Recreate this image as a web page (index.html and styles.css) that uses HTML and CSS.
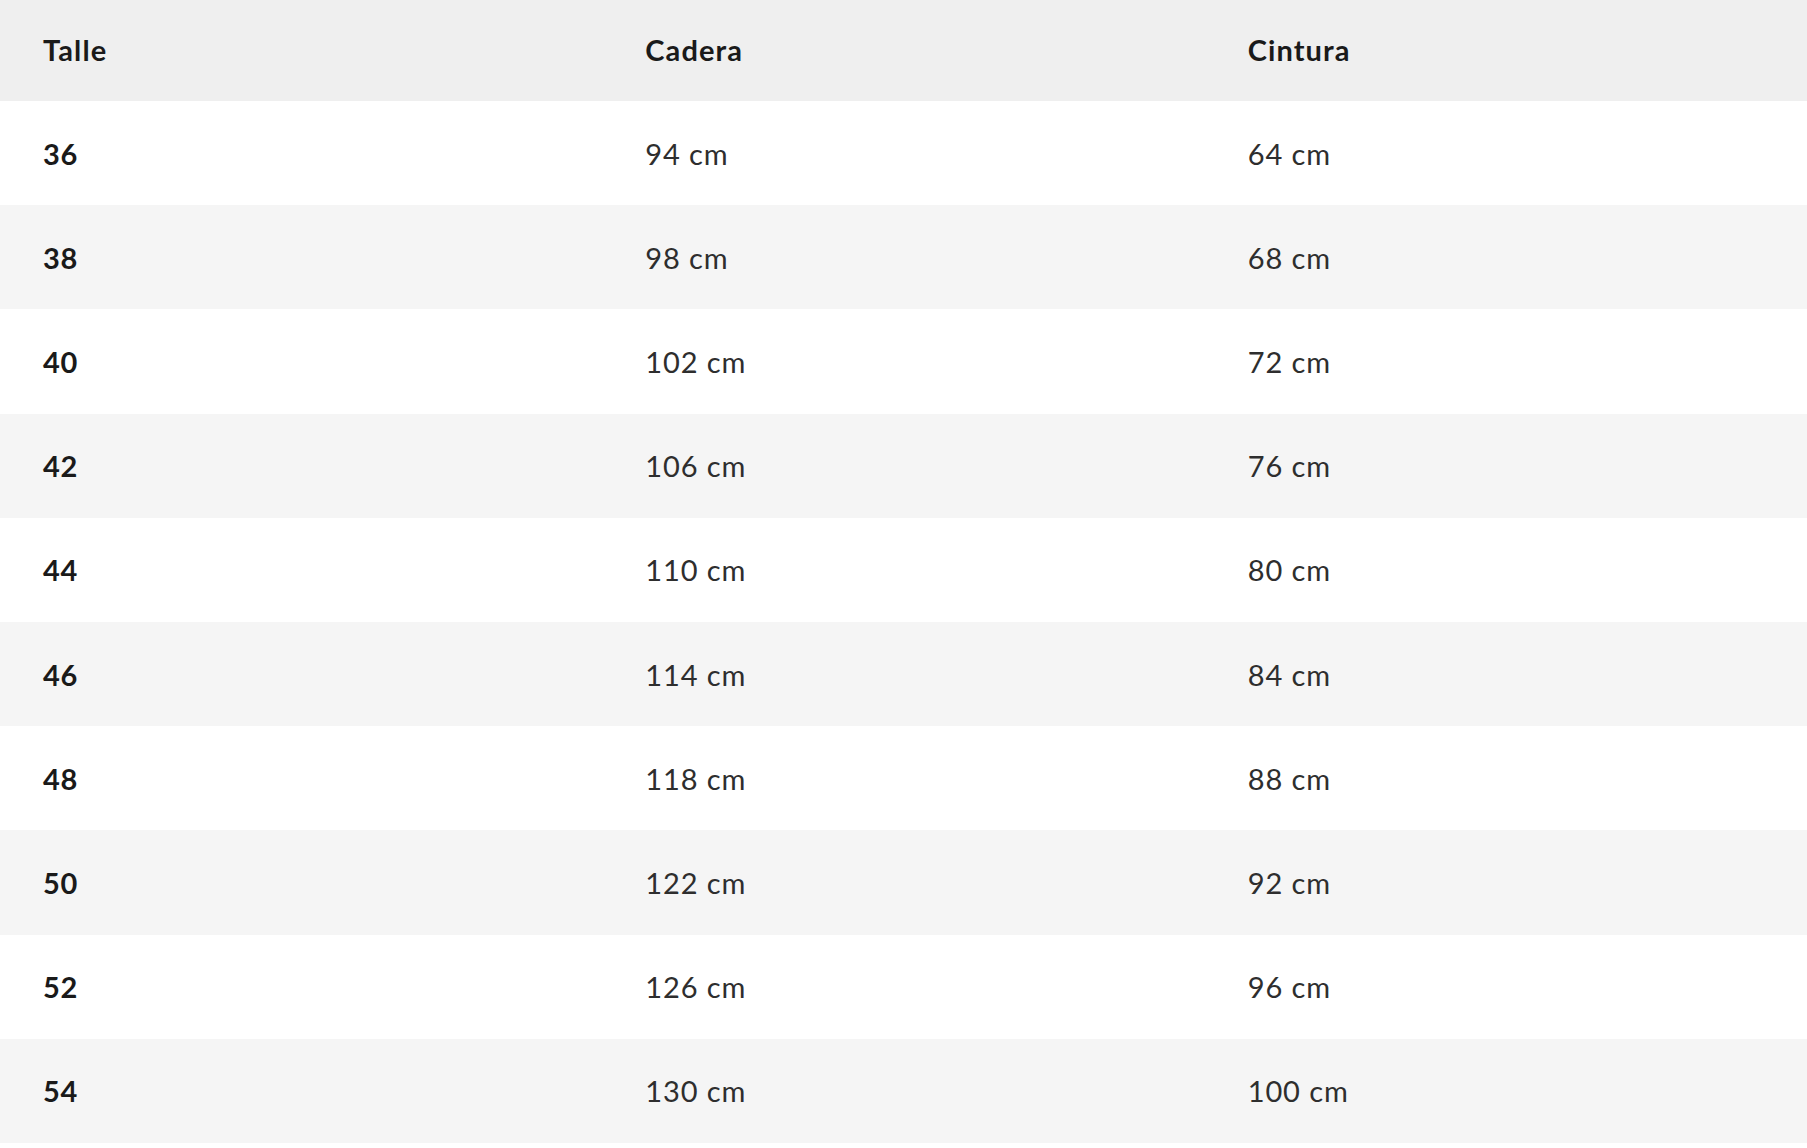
FILE: index.html
```html
<!DOCTYPE html>
<html lang="es">
<head>
<meta charset="utf-8">
<title>Tabla de talles</title>
<link rel="stylesheet" href="styles.css">
</head>
<body>
<table class="size-table">
  <thead>
    <tr class="head-row"><th>Talle</th><th>Cadera</th><th>Cintura</th></tr>
  </thead>
  <tbody>
    <tr><td class="size">36</td><td>94 cm</td><td>64 cm</td></tr>
    <tr><td class="size">38</td><td>98 cm</td><td>68 cm</td></tr>
    <tr><td class="size">40</td><td>102 cm</td><td>72 cm</td></tr>
    <tr><td class="size">42</td><td>106 cm</td><td>76 cm</td></tr>
    <tr><td class="size">44</td><td>110 cm</td><td>80 cm</td></tr>
    <tr><td class="size">46</td><td>114 cm</td><td>84 cm</td></tr>
    <tr><td class="size">48</td><td>118 cm</td><td>88 cm</td></tr>
    <tr><td class="size">50</td><td>122 cm</td><td>92 cm</td></tr>
    <tr><td class="size">52</td><td>126 cm</td><td>96 cm</td></tr>
    <tr><td class="size">54</td><td>130 cm</td><td>100 cm</td></tr>
  </tbody>
</table>
</body>
</html>
```
FILE: styles.css
```css
html, body {
  margin: 0;
  padding: 0;
  background: #ffffff;
}

body {
  font-family: Lato, "Liberation Sans", sans-serif;
  color: #2a2a2a;
}

.size-table {
  width: 100%;
  border-collapse: collapse;
  table-layout: fixed;
}

.size-table th,
.size-table td {
  text-align: left;
  vertical-align: middle;
  padding: 0 0 0 43px;
  font-size: 29px;
  line-height: 1;
  letter-spacing: 0.9px;
}

.head-row {
  background: #efefef;
  height: 101px;
}

.size-table th {
  font-weight: 700;
  color: #1a1a1a;
  padding-bottom: 2px;
  letter-spacing: 1.1px;
}

.size-table tbody tr {
  height: 104.2px;
  background: #ffffff;
}

.size-table tbody tr:nth-child(even) {
  background: #f5f5f5;
}

.size-table td {
  font-weight: 400;
  color: #2e2e2e;
}

.size-table td.size {
  font-weight: 700;
  color: #1a1a1a;
  letter-spacing: 0.8px;
}
```
